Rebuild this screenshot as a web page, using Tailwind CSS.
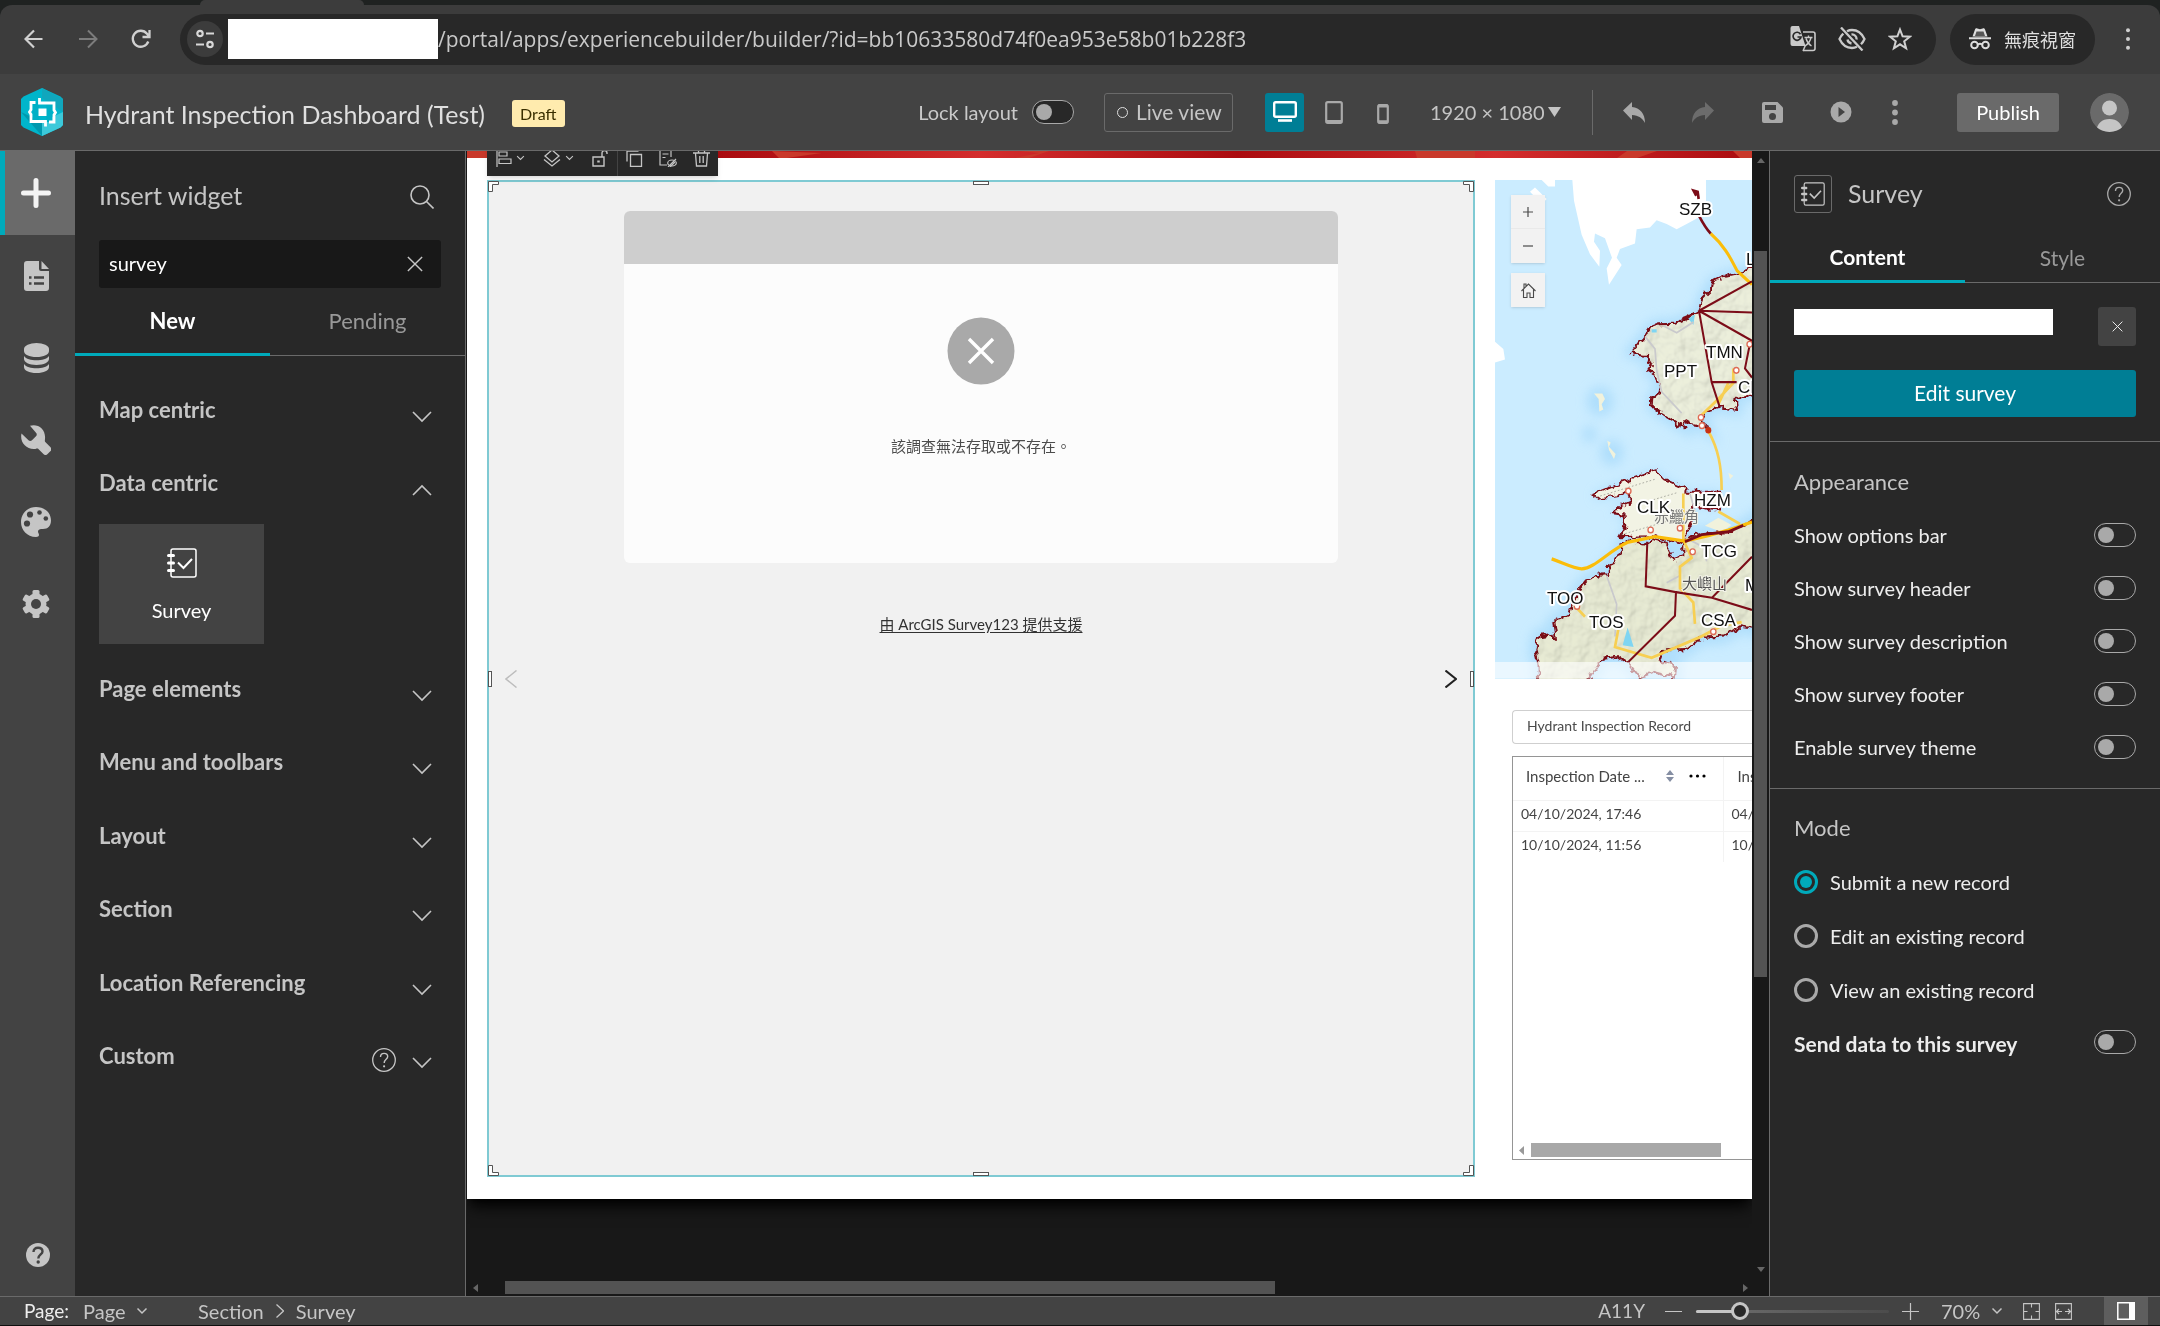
<!DOCTYPE html>
<html lang="en">
<head>
<meta charset="utf-8">
<title>Hydrant Inspection Dashboard (Test)</title>
<script src="https://cdn.jsdelivr.net/npm/@tailwindcss/browser@4"></script>
</head>
<body class="flex h-screen flex-col overflow-hidden bg-[#0f0f0f] font-['Lato','Noto_Sans_CJK_TC',sans-serif] text-[21px] leading-7 text-[#c5c5c5]">
<svg class="hidden">
  <symbol id="chev" viewBox="0 0 20 12"><path d="M1 1l9 9 9-9" fill="none" stroke="currentColor" stroke-width="1.6"/></symbol>
  <symbol id="chev-s" viewBox="0 0 12 8"><path d="M1.500 1.500L6 6l4.500-4.500" fill="none" stroke="currentColor" stroke-width="1.500"/></symbol>
  <symbol id="cross" viewBox="0 0 18 18"><path d="M1 1l16 16M17 1L1 17" fill="none" stroke="currentColor" stroke-width="1.600"/></symbol>
  <symbol id="help" viewBox="0 0 24 24"><circle cx="12" cy="12" r="11.300" fill="none" stroke="currentColor" stroke-width="1.300"/><path d="M8.500 9c0-2.300 1.500-3.600 3.600-3.600 2.200 0 3.600 1.300 3.600 3.200 0 2.800-3.500 2.800-3.500 6.400" fill="none" stroke="currentColor" stroke-width="1.400"/><circle cx="12.100" cy="18.300" r="1.100" fill="currentColor"/></symbol>
  <symbol id="survey" viewBox="0 0 30 30"><rect x="4" y="1" width="25" height="28" rx="2" fill="none" stroke="currentColor" stroke-width="1.500"/><path d="M1.500 7.500h5M1.500 15h5M1.500 22.500h5" stroke="currentColor" stroke-width="3" stroke-linecap="round"/><path d="M11 14.500l5.500 5.500 8.500-9" fill="none" stroke="currentColor" stroke-width="2"/></symbol>
</svg>

<!-- browser chrome -->
<div class="h-[5px] shrink-0 bg-[#1f2221] pl-[200px]"><div class="h-full w-[164px] rounded-t-md bg-[#3c3c3c]"></div></div>
<div class="shrink-0 bg-[#1f2221]">
<header class="flex h-[69px] items-center rounded-t-xl bg-[#3c3c3c] pr-[30px] pb-px pl-6">
  <button aria-label="Back" class="w-[54px]"><svg class="size-5" viewBox="0 0 20 20" fill="none" stroke="#d0d0d0" stroke-width="2.200"><path d="M18.500 10H2M10 1.500L1.500 10l8.500 8.500"/></svg></button>
  <button aria-label="Forward" class="w-[53px]"><svg class="size-5" viewBox="0 0 20 20" fill="none" stroke="#7c7c7c" stroke-width="2"><path d="M1 10h17M10 1.500l8.500 8.500-8.500 8.500"/></svg></button>
  <button aria-label="Reload" class="w-[49px]"><svg class="size-5" viewBox="0 0 20 20" fill="none" stroke="#d0d0d0" stroke-width="2.300"><path d="M17.300 12.500A8 8 0 1 1 16 4.700l2 2.500M18.500 1v7h-7"/></svg></button>
  <div class="flex h-[51px] flex-1 items-center rounded-full bg-[#282828] pr-6 pl-[7px]">
    <button aria-label="Site information" class="flex size-9 items-center justify-center rounded-full bg-[#3c3c3c]"><svg class="size-5" viewBox="0 0 20 20" fill="none" stroke="#d8d8d8" stroke-width="2.200"><circle cx="5" cy="4.500" r="2.700"/><path d="M11 4.500h8M1 15.500h8"/><circle cx="15" cy="15.500" r="2.700"/></svg></button>
    <div class="ml-[5px] h-10 w-[210px] bg-white"></div>
    <input aria-label="Address" class="min-w-0 flex-1 font-['Open_Sans','Noto_Sans',sans-serif] text-[21px] text-[#c9c9c9] outline-none" value="/portal/apps/experiencebuilder/builder/?id=bb10633580d74f0ea953e58b01b228f3">
    <div class="flex items-center gap-[22px]">
      <button aria-label="Translate"><svg class="size-[26px]" viewBox="0 0 26 26"><path d="M13 6h10a2 2 0 0 1 2 2v14.500a2 2 0 0 1-2 2H13" fill="none" stroke="#c9c9c9" stroke-width="1.600"/><path d="M2.500 0H9l6.500 20H2.500A2 2 0 0 1 .5 18V2a2 2 0 0 1 2-2z" fill="#c9c9c9"/><path d="M13 25l2.500-6" stroke="#c9c9c9" stroke-width="1.500"/><path d="M10.500 8.200A4 4 0 1 0 11 11H7.500" fill="none" stroke="#282828" stroke-width="1.700"/><path d="M14.500 11.500h8M18.500 9.500v2M21 11.500c-.8 4-3 6.500-6 8.500M16 12.500c1 3.500 3 6 5.500 7.500" fill="none" stroke="#c9c9c9" stroke-width="1.400"/></svg></button>
      <button aria-label="Tracking blocked"><svg class="h-6 w-7" viewBox="0 0 28 24" fill="none" stroke="#c9c9c9" stroke-width="2.300"><path d="M9 4.200c1.500-.8 3.200-1.200 5-1.200 5.600 0 10 3.700 12.500 9-.9 2-2 3.700-3.500 5.200M19 19.700c-1.500.8-3.200 1.300-5 1.300-5.600 0-10-3.700-12.500-9 .9-2 2.200-3.800 3.800-5.300"/><path d="M13.500 7.500a4.500 4.500 0 0 1 5 5M9.500 12.500c.3 2 1.700 3.600 4 4M3 .5l21.500 23"/></svg></button>
      <button aria-label="Bookmark"><svg class="size-6" viewBox="0 0 24 24" fill="none" stroke="#d0d0d0" stroke-width="2"><path d="M12 2.500l2.600 6.800 7.200.4-5.600 4.600 1.900 7L12 17.300l-6.100 4 1.900-7-5.600-4.600 7.200-.4z"/></svg></button>
    </div>
  </div>
  <div class="ml-[14px] flex h-[51px] items-center gap-[13px] rounded-full bg-[#282828] px-[19px] font-['Noto_Sans_CJK_TC',sans-serif] text-[18px] text-[#dedede]">
    <svg class="size-[22px]" viewBox="0 0 22 22" fill="#dedede"><path d="M0 9.300h22v2H0zM3.500 8.500L6 1.500C6.300.5 7.300 0 8.300.4L11 1.300l2.700-.9c1-.4 2 .1 2.300 1.100l2.500 7z"/><path d="M7.500 3.500h7L16 8H6z" fill="#282828" opacity=".75"/><g fill="none" stroke="#dedede" stroke-width="2"><circle cx="5.500" cy="17" r="3.300"/><circle cx="16.500" cy="17" r="3.300"/><path d="M8.800 16.500q2.200-1.500 4.400 0"/></g></svg>
    無痕視窗
  </div>
  <button aria-label="Browser menu" class="ml-[31px]"><svg class="h-[22px] w-1" viewBox="0 0 4 22" fill="#cfcfcf"><circle cx="2" cy="2.200" r="2"/><circle cx="2" cy="11" r="2"/><circle cx="2" cy="19.800" r="2"/></svg></button>
</header>
</div>

<!-- application bar -->
<header class="flex h-[77px] shrink-0 items-center border-b border-[#6a6a6a] bg-[#434343] pr-[31px] pl-[21px]">
  <svg class="h-12 w-[42px]" viewBox="0 0 42 48"><path d="M21 0l18.500 8.500L42 11v26l-2.500 2.500L21 48 2.500 39.500 0 37V11l2.500-2.500z" fill="#00b5cb"/><path d="M21 48l18.500-8.500L42 37V24L21 34z" fill="#3cc9da"/><path d="M21 0L42 11v13L21 10z" fill="#10a7bd"/><path d="M0 24l21 24V34z" fill="#0098ae"/><path d="M12 14h6v20h-6zM25 14h6v20h-6z" fill="#00b0c6"/><g fill="none" stroke="#fff" stroke-width="2.800"><path d="M18.500 10v5H33v7l1.500 2.500L33 27v7h-5"/><path d="M24.500 38.500v-5H10v-7L8.500 24l1.500-2.500V14.500h4.500"/></g><path d="M17.500 20.500h8v7.500h-8z" fill="#fff"/></svg>
  <h1 class="ml-[22px] pt-[3px] text-[25px] leading-8 text-[#dfdfdf]">Hydrant Inspection Dashboard (Test)</h1>
  <span class="mt-[3px] ml-[27px] flex h-[27px] items-center rounded-[3px] bg-[#ffebae] px-2 text-[16px] text-[#3a2f00]">Draft</span>
  <div class="ml-auto flex items-center">
    <label for="lock" class="text-[20px] text-[#c9c9c9]">Lock layout</label>
    <input id="lock" type="checkbox" class="ml-[14px] h-6 w-[42px] appearance-none rounded-full border border-[#a9a9a9] bg-[#282828] before:mt-[3px] before:ml-[3px] before:block before:size-4 before:rounded-full before:bg-[#a9a9a9]">
    <button class="ml-[30px] flex h-[39px] w-[129px] items-center gap-2 rounded-[3px] border border-[#6a6a6a] pl-3 text-[21px]"><span class="size-[11px] rounded-full border border-[#dfdfdf]"></span>Live view</button>
    <button aria-label="Desktop" class="ml-8 flex h-[39px] w-[39px] items-center justify-center rounded-[3px] bg-[#007e95]"><svg class="h-[22px] w-6" viewBox="0 0 24 22"><rect x="1.200" y="1.200" width="21.600" height="14.600" rx="1.500" fill="none" stroke="#fff" stroke-width="2.400"/><path d="M5 19.500h14" stroke="#fff" stroke-width="2.600"/></svg></button>
    <button aria-label="Tablet" class="ml-[21px]"><svg class="h-[23px] w-[18px]" viewBox="0 0 18 23"><rect x="1.200" y="1.200" width="15.600" height="20.600" rx="1.500" fill="none" stroke="#a9a9a9" stroke-width="2.200"/><path d="M1 20.500h16" stroke="#a9a9a9" stroke-width="3"/></svg></button>
    <button aria-label="Phone" class="ml-[34px] pt-1"><svg class="h-5 w-3" viewBox="0 0 12 20"><rect x="1.200" y="1.200" width="9.600" height="17.600" rx="1.500" fill="none" stroke="#a9a9a9" stroke-width="2.200"/><path d="M1 2h10M1 17.700h10" stroke="#a9a9a9" stroke-width="3"/></svg></button>
    <select aria-label="Screen size" class="ml-[41px] w-[118px] appearance-none text-[20px] outline-none"><option>1920 × 1080</option></select>
    <svg class="h-[10px] w-[13px]" viewBox="0 0 13 10" fill="#c5c5c5"><path d="M0 0h13L6.500 10z"/></svg>
    <div class="ml-[31px] h-[45px] w-px bg-[#6a6a6a]"></div>
    <button aria-label="Undo" class="ml-[30px]"><svg class="h-[21px] w-[22px]" viewBox="0 0 22 21" fill="#a9a9a9"><path d="M9 0v5c8 .8 13 6.500 13 16-2.500-5-6.500-7.500-13-8v5L0 8.500z"/></svg></button>
    <button aria-label="Redo" class="ml-[47px]"><svg class="h-[21px] w-[22px]" viewBox="0 0 22 21" fill="#6c6c6c"><path d="M13 0v5C5 5.800 0 11.500 0 21c2.500-5 6.500-7.500 13-8v5l9-9.500z"/></svg></button>
    <button aria-label="Save" class="ml-12"><svg class="size-[21px]" viewBox="0 0 21 21"><path d="M2 0h13.500L21 5.500V19a2 2 0 0 1-2 2H2a2 2 0 0 1-2-2V2a2 2 0 0 1 2-2z" fill="#a9a9a9"/><path d="M3 3h11v5H3z" fill="#434343"/><circle cx="10.500" cy="14.500" r="3.500" fill="#434343"/></svg></button>
    <button aria-label="Preview" class="ml-[47px]"><svg class="size-[22px]" viewBox="0 0 22 22"><circle cx="11" cy="11" r="10.500" fill="#a9a9a9"/><path d="M8.500 6l6.500 5-6.500 5z" fill="#434343"/></svg></button>
    <button aria-label="More" class="ml-10"><svg class="h-[25px] w-[6px]" viewBox="0 0 6 25" fill="#a9a9a9"><circle cx="3" cy="3" r="2.900"/><circle cx="3" cy="12.500" r="2.900"/><circle cx="3" cy="22" r="2.900"/></svg></button>
    <button class="ml-[59px] h-[39px] w-[102px] rounded-[3px] bg-[#6a6a6a] text-[20px] text-white">Publish</button>
    <button aria-label="Account" class="ml-[31px]"><svg class="size-[39px] rounded-full" viewBox="0 0 39 39"><circle cx="19.500" cy="19.500" r="19.500" fill="#6a6a6a"/><circle cx="19.500" cy="15" r="7.500" fill="#c5c5c5"/><path d="M6 39c1-9 6-13 13.500-13S32 30 33 39z" fill="#c5c5c5"/></svg></button>
  </div>
</header>

<main class="flex min-h-0 flex-1">
  <!-- tool rail -->
  <nav class="flex w-[75px] shrink-0 flex-col justify-between bg-[#434343] text-[#c5c5c5]">
    <div class="flex flex-col">
      <button aria-label="Insert" class="flex h-[84px] items-center border-l-[5px] border-[#00aabb] bg-[#6a6a6a] pl-4"><svg class="size-[30px]" viewBox="0 0 30 30"><path d="M15 2.500v25M2.500 15h25" stroke="#f4f4f4" stroke-width="5" stroke-linecap="round"/></svg></button>
      <button aria-label="Page" class="flex h-[82px] items-center pl-6"><svg class="h-[30px] w-[25px]" viewBox="0 0 25 30"><path d="M3 0h12v8a2 2 0 0 0 2 2h8v17a3 3 0 0 1-3 3H3a3 3 0 0 1-3-3V3a3 3 0 0 1 3-3zM17.500 0L25 8h-7.500z" fill="currentColor"/><path d="M5 16.500h2.500M10 16.500h10M5 22.500h2.500M10 22.500h10" stroke="#434343" stroke-width="2.600"/></svg></button>
      <button aria-label="Data" class="flex h-[82px] items-center pl-6"><svg class="h-[30px] w-[25px]" viewBox="0 0 25 30" fill="currentColor"><ellipse cx="12.500" cy="6" rx="12.500" ry="6"/><path d="M0 6h25v2c0 3.500-5 6-12.500 6S0 11.500 0 8zM0 13c2 3 7 4.300 12.500 4.300S23 16 25 13v3c0 3-5 6-12.500 6S0 19 0 16zM0 21c2 3 7 4.300 12.500 4.300S23 24 25 21v3c0 3.500-5 6-12.500 6S0 27.500 0 24z"/></svg></button>
      <button aria-label="Utilities" class="flex h-[82px] items-center pl-[21px]"><svg class="size-[30px]" viewBox="0 0 30 30" fill="currentColor"><path d="M9 .8C17-1.500 25 4 24 14c-.2 1.500-.3 2.500.3 3.100l5 5a3 3 0 0 1 0 4.200l-2.700 2.700a3 3 0 0 1-4.200 0l-5-5c-.6-.6-1.600-.4-2.900-.1C5.500 25-1.500 17.500.5 8.500l7 6.800c1 1 2.500 1 3.500 0l4-4c1-1 1-2.500 0-3.500z"/></svg></button>
      <button aria-label="Theme" class="flex h-[82px] items-center pl-[21px]"><svg class="size-[30px]" viewBox="0 0 30 30"><path d="M15 0c9 0 15 6 15 13.500 0 5-3 8.500-8 8.500-3 0-5 .5-5 2.500 0 1.500 1 2 1 3.500 0 1.300-1.200 2-3 2C6 30 0 23 0 15S6 0 15 0z" fill="currentColor"/><g fill="#434343"><circle cx="9" cy="7.500" r="3.100"/><circle cx="18.500" cy="5.500" r="2.300"/><circle cx="24.800" cy="11.500" r="2.300"/><circle cx="6" cy="16.500" r="3.100"/></g></svg></button>
      <button aria-label="Settings" class="flex h-[82px] items-center pl-[22px]"><svg class="size-[28px]" viewBox="0 0 28 28"><g fill="currentColor"><circle cx="14" cy="14" r="10.500"/><rect x="10.500" y="0" width="7" height="28" rx="1.500"/><rect x="10.500" y="0" width="7" height="28" rx="1.500" transform="rotate(60 14 14)"/><rect x="10.500" y="0" width="7" height="28" rx="1.500" transform="rotate(120 14 14)"/></g><circle cx="14" cy="14" r="5" fill="#434343"/></svg></button>
    </div>
    <button aria-label="Help" class="mb-[29px] pl-[26px]"><svg class="size-6" viewBox="0 0 24 24"><circle cx="12" cy="12" r="12" fill="currentColor"/><path d="M7.500 9c0-2.800 1.800-4.300 4.500-4.300 2.800 0 4.500 1.500 4.500 3.700 0 3-4 3.200-4.200 7.100" fill="none" stroke="#434343" stroke-width="2.400"/><circle cx="12.200" cy="19" r="1.700" fill="#434343"/></svg></button>
  </nav>

  <!-- insert panel -->
  <aside class="flex w-[391px] shrink-0 flex-col border-r border-[#6a6a6a] bg-[#282828]">
    <div class="flex items-start justify-between pt-7 pr-[31px] pl-6">
      <h2 class="text-[25px] leading-8 text-[#c5c5c5]">Insert widget</h2>
      <button aria-label="Search" class="pt-[6px]"><svg class="size-6" viewBox="0 0 24 24" fill="none" stroke="#c5c5c5" stroke-width="1.600"><circle cx="10" cy="10" r="9"/><path d="M16.500 16.500L23.500 23.500"/></svg></button>
    </div>
    <div class="mt-[29px] mr-6 ml-6 flex h-12 items-center rounded-[3px] bg-[#181818] pr-[18px] pl-[10px]">
      <input aria-label="Search widgets" value="survey" class="min-w-0 flex-1 pb-[2px] text-[20px] text-white outline-none">
      <button aria-label="Clear"><svg class="size-4"><use href="#cross"/></svg></button>
    </div>
    <div class="mt-1 grid h-[64px] grid-cols-2 border-b border-[#6a6a6a]">
      <button class="-mb-px border-b-[3px] border-[#00aabb] pb-1 text-[22px] font-bold text-white">New</button>
      <button class="pb-[6px] text-[22px] text-[#999]">Pending</button>
    </div>
    <div class="flex flex-col pt-[18px] pr-[33px] pl-6 text-[22px] font-bold text-[#c5c5c5]">
      <button class="flex h-[73px] items-center justify-between pb-[2px]"><span>Map centric</span><svg class="mt-[14px] h-3 w-5"><use href="#chev"/></svg></button>
      <button class="flex h-[73px] items-center justify-between pb-[2px]"><span>Data centric</span><svg class="mt-[14px] h-3 w-5 rotate-180"><use href="#chev"/></svg></button>
      <button class="mt-1 mb-[9px] flex h-[120px] w-[165px] flex-col items-center bg-[#434343] pt-6 text-[20px] font-normal text-white"><svg class="size-[30px]"><use href="#survey"/></svg><span class="mt-[18px]">Survey</span></button>
      <button class="flex h-[73px] items-center justify-between pb-[2px]"><span>Page elements</span><svg class="mt-[14px] h-3 w-5"><use href="#chev"/></svg></button>
      <button class="flex h-[74px] items-center justify-between pb-[2px]"><span>Menu and toolbars</span><svg class="mt-[14px] h-3 w-5"><use href="#chev"/></svg></button>
      <button class="flex h-[73px] items-center justify-between pb-[2px]"><span>Layout</span><svg class="mt-[14px] h-3 w-5"><use href="#chev"/></svg></button>
      <button class="flex h-[74px] items-center justify-between pb-[2px]"><span>Section</span><svg class="mt-[14px] h-3 w-5"><use href="#chev"/></svg></button>
      <button class="flex h-[73px] items-center justify-between pb-[2px]"><span>Location Referencing</span><svg class="mt-[14px] h-3 w-5"><use href="#chev"/></svg></button>
      <button class="flex h-[73px] items-center pb-[2px]"><span class="flex-1 text-left">Custom</span><svg class="mt-2 mr-4 size-6"><use href="#help"/></svg><svg class="mt-[14px] h-3 w-5"><use href="#chev"/></svg></button>
    </div>
  </aside>

  <!-- canvas -->
  <section class="flex min-w-0 flex-1 flex-col bg-[#181818] pl-px">
    <div class="flex min-h-0 flex-1">
      <div class="relative min-w-0 flex-1 overflow-hidden">
        <div class="bg-white pb-[22px] shadow-lg shadow-black">
          <svg class="block h-[7px] w-full" viewBox="0 0 1285 7" preserveAspectRatio="none"><defs><linearGradient id="red" x2=".2" spreadMethod="reflect"><stop offset="0" stop-color="#d42d2d"/><stop offset="1" stop-color="#ab0c10"/></linearGradient></defs><path fill="url(#red)" d="M0 0h1285v7H0z"/><path fill="#c9392b" d="M0 0h90v7H0zM305 0l50 2-35 5h-8zM548 7l24-5-20-2h30l-20 7zM948 0h60v7h-58zM1160 0h30l-20 7h-20zM1266 0h19v7h-12z"/></svg>
          <div class="flex gap-5 pt-[22px] pl-5">
            <div class="relative h-[997px] min-w-0 flex-1 border-2 border-[#7fcad3] bg-[#f1f1f1] pt-[29px]">
              <div class="mx-auto flex h-[352px] w-[714px] flex-col items-center overflow-hidden rounded-md bg-[#fcfcfc]">
                <div class="h-[53px] w-full bg-[#cecece]"></div>
                <svg class="mt-[53px] size-[68px]" viewBox="0 0 68 68"><circle cx="34" cy="34" r="33.500" fill="#a9a9a9"/><path d="M22 22l24 24M46 22L22 46" stroke="#fff" stroke-width="3.400"/></svg>
                <p class="mt-[47px] text-[15px] text-[#4c4c4c]">該調查無法存取或不存在。</p>
              </div>
              <a href="#" class="mx-auto mt-[47px] block w-fit text-[15px] text-[#323232] underline underline-offset-2">由 ArcGIS Survey123 提供支援</a>
              <button aria-label="Previous" class="absolute top-[488px] left-4 flex"><svg class="h-[18px] w-3" viewBox="0 0 12 18" fill="none" stroke="#bdbdbd" stroke-width="1.500"><path d="M11.500 .5L1 9l10.500 8.500"/></svg></button>
              <button aria-label="Next" class="absolute top-[488px] right-4 flex"><svg class="h-[18px] w-3" viewBox="0 0 12 18" fill="none" stroke="#222" stroke-width="2"><path d="M.5 .5L11 9 .5 17.500"/></svg></button>
              <svg class="absolute -top-px -left-px size-[11px]" viewBox="0 0 11 11" fill="#fff" stroke="#555"><path d="M.5.5h10v3h-6v7h-4z"/></svg>
              <svg class="absolute -top-px -right-px size-[11px]" viewBox="0 0 11 11" fill="#fff" stroke="#555"><path d="M10.500.5H.5v3h6v7h4z"/></svg>
              <svg class="absolute -bottom-px -left-px size-[11px]" viewBox="0 0 11 11" fill="#fff" stroke="#555"><path d="M.5 10.500h10v-3h-6v-7h-4z"/></svg>
              <svg class="absolute -right-px -bottom-px size-[11px]" viewBox="0 0 11 11" fill="#fff" stroke="#555"><path d="M10.500 10.500H.5v-3h6v-7h4z"/></svg>
              <div class="absolute -top-px left-1/2 h-1 w-4 -translate-x-1/2 border border-[#555] bg-white"></div>
              <div class="absolute -bottom-px left-1/2 h-1 w-4 -translate-x-1/2 border border-[#555] bg-white"></div>
              <div class="absolute top-1/2 -left-px h-4 w-1 -translate-y-1/2 border border-[#555] bg-white"></div>
              <div class="absolute top-1/2 -right-px h-4 w-1 -translate-y-1/2 border border-[#555] bg-white"></div>
            </div>
            <div class="flex w-[257px] shrink-0 flex-col">
              <div class="relative h-[499px]">
                <svg class="block h-full w-full" viewBox="0 0 257 499" font-family="Liberation Sans">
                  <defs>
                    <filter id="soft" x="-30%" y="-30%" width="160%" height="160%"><feGaussianBlur stdDeviation="16"/></filter>
                    <filter id="coast"><feTurbulence type="fractalNoise" baseFrequency=".05" numOctaves="2" seed="7"/><feDisplacementMap in="SourceGraphic" scale="26" xChannelSelector="R" yChannelSelector="G"/></filter>
                    <filter id="relief" x="0" y="0" width="100%" height="100%"><feTurbulence type="fractalNoise" baseFrequency=".02" numOctaves="3" seed="4" result="n"/><feDiffuseLighting in="n" surfaceScale="14" lighting-color="#fbfbf0" result="l"><feDistantLight azimuth="225" elevation="62"/></feDiffuseLighting><feComposite in="l" in2="SourceGraphic" operator="in"/></filter>
                    <path id="north" d="M1076 352L1018 372 980 380 950 392 932 402 930 420 908 440 900 478 860 500 820 515 775 516 752 524 735 548 710 575 692 594 712 602 738 604 756 630 745 645 762 655 780 685 775 710 757 722 755 745 790 770 825 790 857 808 850 785 870 795 900 800 925 815 905 775 915 760 958 748 1012 756 1006 728 1076 705z"/>
                    <path id="clk" d="M580 990L690 950 768 925 795 950 855 975 864 985 900 985 962 985 960 1035 920 1030 880 1020 862 1040 875 1070 860 1100 850 1130 760 1110 658 1112 676 1080 670 1052 638 1048 650 1030 690 1012 685 990 585 1006z"/>
                    <path id="south" d="M1076 1052L1030 1082 985 1098 937 1100 880 1106 850 1130 850 1165 820 1175 800 1130 760 1120 730 1130 685 1122 665 1135 660 1160 645 1183 622 1190 628 1218 610 1216 560 1235 540 1258 520 1290 508 1325 460 1352 468 1400 445 1385 416 1390 406 1425 415 1460 418 1528 550 1528 590 1480 610 1450 650 1445 690 1470 720 1505 760 1490 825 1505 828 1475 775 1455 790 1430 860 1425 900 1395 970 1390 1020 1362 1076 1372z"/>
                  </defs>
                  <path fill="#cbecff" d="M0 0h257v499H0z"/>
                  <g transform="scale(.3333 .3571) translate(-285 -112)">
                    <g fill="#a0d7fa" opacity=".65" filter="url(#soft)"><use href="#north" stroke="#a0d7fa" stroke-width="30"/><use href="#clk"/><use href="#south" stroke="#a0d7fa" stroke-width="40"/><circle cx="600" cy="732" r="40"/><circle cx="568" cy="824" r="22"/><circle cx="635" cy="875" r="35"/></g>
                    <path fill="#fff" d="M516 100H918V170L900 215 860 235 830 250 800 235 770 225 750 245 710 250 705 290 660 305 650 330 665 350 627 405 620 360 636 330 615 275 585 262 582 285 600 310 598 355 570 320 545 265 522 170zM390 145l15-12 35 32-15 15zM425 112h40v18h-20zM285 565l25 20 5 30-30 8z"/>
                    <g stroke="#7c0c18" stroke-width="6" stroke-linejoin="round" filter="url(#coast)"><use href="#north" fill="#edf0e0"/><use href="#clk" fill="#f2f3e4"/><use href="#south" fill="#e9ecd8"/></g>
                    <g filter="url(#relief)" opacity=".32" style="mix-blend-mode:multiply"><use href="#north"/><use href="#south"/></g>
                    <g fill="#f1f2dc"><path d="M582 710l25 0 8 15-10 15 5 15-12 5-2-35zM622 842l10 5-5 12 20 20-5 14-15-25zM985 932l15 8-10 10zM915 1080l40-22 40 20-30 20z"/></g>
                    <g fill="#7fd5f2"><path d="M668 1415l15-50 18 55zM865 500l20-12-5 30zM755 530h15v9h-15z"/></g>
                    <g fill="none" stroke="#c9c9cc" stroke-width="5"><path d="M735 550l30 35 5 60 15 60 60 60M790 520l40 20 50-30M870 990l15 50M620 1220l30 80-5 90M800 1240l40-20M850 1110l60 30 10 40"/></g>
                    <g fill="none" stroke="#8d8d86" stroke-width="2" stroke-dasharray="5 6"><path d="M590 1000l175-50M665 1105l165-45M750 1010l80-22"/></g>
                    <g fill="none" stroke="#f7cf52" stroke-width="8"><path d="M925 815c30 50 40 100 40 165M955 1040l65 35M1000 640v40l-50 50-45 40M985 680l-30 60M850 990v130l25 50-35 25v60l40 40 5 60M525 1305l30 30M655 1370l-10 50 110 30 150-60 60-30 60-10"/></g>
                    <g fill="none" stroke="#fbbd0a" stroke-width="9"><path d="M455 1173c50 18 70 28 90 28 40-2 80-50 140-75l80-15 90 12 70-15 60-16 71-22M932 262c45 38 60 70 80 105l44 38"/></g>
                    <path d="M932 262c-15-15-25-32-34-48M896 165l-3-20-12-3 8 14M855 1125l50-20 80-8 45-18" fill="none" stroke="#7c0c18" stroke-width="8"/>
                    <g fill="none" stroke="#7c0c18" stroke-width="6"><path d="M897 478l159-82M897 478l159 5M897 478l159 84-10 8M897 478l38 200 25 72M935 678h75M1050 570l-15 70 21 25M742 1125l-5 125 91 16-3 66-140 130M828 1266l108 16 120 34M936 1282l120-115"/></g>
                    <g fill="#fff" stroke="#dd6b55" stroke-width="4"><circle cx="685" cy="983" r="8"/><circle cx="752" cy="1092" r="8"/><circle cx="840" cy="1087" r="8"/><circle cx="878" cy="1153" r="8"/><circle cx="531" cy="1306" r="8"/><circle cx="940" cy="1377" r="8"/><circle cx="903" cy="777" r="8"/><circle cx="906" cy="800" r="8"/><circle cx="1009" cy="645" r="8"/><circle cx="1049" cy="572" r="8"/></g>
                    <circle cx="925" cy="813" r="9" fill="#c93214"/>
                    <path fill="#fff" fill-opacity=".6" d="M285 1462h771v46H285z"/>
                  </g>
                  <g font-family="Noto Sans CJK TC" font-size="15" fill="#777" stroke="#f4f4ea" stroke-width="2" paint-order="stroke"><text x="159" y="342">赤鱲角</text><text x="187" y="409" fill="#555">大嶼山</text></g>
                  <g font-size="17" fill="#111" stroke="#fff" stroke-width="4" stroke-linejoin="round" paint-order="stroke"><text x="184" y="35">SZB</text><text x="251" y="85">L</text><text x="211" y="178">TMN</text><text x="169" y="197">PPT</text><text x="243" y="213">CI</text><text x="142" y="333">CLK</text><text x="199" y="326">HZM</text><text x="206" y="377">TCG</text><text x="52" y="424">TOO</text><text x="94" y="448">TOS</text><text x="206" y="446">CSA</text><text x="250" y="411">M</text></g>
                </svg>
                <div class="absolute top-[15px] left-4 flex w-[34px] flex-col gap-[10px] text-[#4a4a4a]">
                  <div class="flex flex-col bg-[#f2f2f2] shadow">
                    <button aria-label="Zoom in" class="flex h-[34px] items-center justify-center border-b border-[#e9e9e9]"><svg class="size-[10px]" viewBox="0 0 10 10" stroke="currentColor" stroke-width="1.200"><path d="M5 0v10M0 5h10"/></svg></button>
                    <button aria-label="Zoom out" class="flex h-[34px] items-center justify-center"><svg class="size-[10px]" viewBox="0 0 10 10" stroke="currentColor" stroke-width="1.200"><path d="M0 5h10"/></svg></button>
                  </div>
                  <button aria-label="Home" class="flex h-[34px] items-center justify-center bg-[#f2f2f2] shadow"><svg class="size-[15px]" viewBox="0 0 15 15" fill="none" stroke="currentColor" stroke-width="1.100"><path d="M.5 8l7-7 7 7M2.500 6.500v8h3.500v-4.500h3v4.500h3.500v-8M3 5V1h2v2.500"/></svg></button>
                </div>
              </div>
              <div class="mt-[31px] ml-[17px] flex h-[34px] items-center rounded-l-sm border border-r-0 border-[#cfcfcf] pb-[3px] pl-[14px] text-[14px] text-[#4a4a4a]">Hydrant Inspection Record</div>
              <div class="mt-3 ml-[17px] flex h-[404px] flex-col justify-between overflow-hidden border border-r-0 border-[#959595] text-[#444]">
                <table class="w-[420px] table-fixed border-collapse text-left leading-5">
                  <thead><tr class="h-[43px] border-b border-[#f3f3f3]">
                    <th class="w-1/2 border-r border-[#f3f3f3] pb-1 pl-[13px] text-[15px] font-normal"><div class="flex items-center whitespace-nowrap"><span class="w-[140px]">Inspection Date ...</span><svg class="h-3 w-2" viewBox="0 0 8 12" fill="#858ea3"><path d="M0 5l4-5 4 5zM0 7l4 5 4-5z"/></svg><svg class="ml-[15px] h-1 w-[17px]" viewBox="0 0 17 4"><circle cx="2" cy="2" r="1.600"/><circle cx="8.500" cy="2" r="1.600"/><circle cx="15" cy="2" r="1.600"/></svg></div></th>
                    <th class="pb-1 pl-[14px] text-[15px] font-normal whitespace-nowrap">Inspection Date</th></tr></thead>
                  <tbody>
                    <tr class="h-[31px] border-b border-[#f3f3f3] text-[14px]"><td class="border-r border-[#f3f3f3] pb-1 pl-2">04/10/2024, 17:46</td><td class="pb-1 pl-2">04/10/2024, 17:46</td></tr>
                    <tr class="h-[31px] text-[14px]"><td class="border-r border-[#f3f3f3] pb-1 pl-2">10/10/2024, 11:56</td><td class="pb-1 pl-2">10/10/2024, 11:56</td></tr>
                  </tbody>
                </table>
                <div class="mb-[2px] flex h-[14px] items-center gap-[7px] pl-[6px]"><svg class="h-[9px] w-[5px]" viewBox="0 0 5 9" fill="#999"><path d="M5 0v9L0 4.500z"/></svg><div class="h-full w-[190px] bg-[#a8a8a8]"></div></div>
              </div>
            </div>
          </div>
        </div>
        <!-- widget toolbar -->
        <div class="absolute -top-[11px] left-5 flex h-9 w-[231px] items-center bg-[#282828] pl-[9px] text-[#c5c5c5] shadow-md">
          <svg class="h-[18px] w-4" viewBox="0 0 16 18" fill="none" stroke="currentColor" stroke-width="1.200"><path d="M1 0v18M3 3h8v4H3zM3 10h12v4.500H3z"/></svg>
          <svg class="ml-1 h-[6px] w-[9px]"><use href="#chev-s"/></svg>
          <svg class="ml-[18px] h-[18px] w-[18px]" viewBox="0 0 18 18" fill="none" stroke="currentColor" stroke-width="1.300"><path d="M9 1l7 6-7 6-7-6zM1 10.500l8 6.500 8-6.500"/></svg>
          <svg class="ml-1 h-[6px] w-[9px]"><use href="#chev-s"/></svg>
          <svg class="ml-[18px] h-[18px] w-4" viewBox="0 0 16 18" fill="none" stroke="currentColor" stroke-width="1.400"><path d="M1 8h11v9H1zM10 8V4a2.500 2.500 0 0 1 5 0v1"/><path d="M6.500 11.500v2" stroke-width="2.500"/></svg>
          <div class="ml-[9px] h-full w-px bg-[#434343]"></div>
          <svg class="ml-2 size-[17px]" viewBox="0 0 17 17" fill="none" stroke="currentColor" stroke-width="1.300"><path d="M4.500 4.500h11v12h-11zM1 11.500V1h11.500"/></svg>
          <svg class="ml-4 h-[18px] w-[18px]" viewBox="0 0 18 18" fill="none" stroke="currentColor" stroke-width="1.200"><path d="M8 16H1V1h11v7M3.500 5h6M3.500 8.500h3"/><ellipse cx="13" cy="14" rx="4.300" ry="3"/><path d="M9 18l8-8M11 18l5-5"/></svg>
          <svg class="ml-4 h-[18px] w-[17px]" viewBox="0 0 17 18" fill="none" stroke="currentColor" stroke-width="1.300"><path d="M0 4h17M5.500 3.500V1h6v2.500M2.500 4.500l1 12.500h10l1-12.500M6.800 7v7M10.200 7v7"/></svg>
        </div>
      </div>
      <div class="flex w-[17px] shrink-0 flex-col items-center justify-between pt-[7px] pb-[7px]">
        <svg class="h-[5px] w-2" viewBox="0 0 8 5" fill="#666"><path d="M4 0l4 5H0z"/></svg>
        <div class="mt-[88px] h-[726px] w-[13px] bg-[#535353]"></div>
        <svg class="mt-auto h-[5px] w-2" viewBox="0 0 8 5" fill="#666"><path d="M0 0h8L4 5z"/></svg>
      </div>
    </div>
    <div class="flex h-[17px] items-center pr-[21px] pl-[6px]">
      <svg class="h-2 w-[5px]" viewBox="0 0 5 8" fill="#666"><path d="M5 0v8L0 4z"/></svg>
      <div class="ml-[27px] h-[13px] w-[770px] bg-[#535353]"></div>
      <svg class="ml-auto h-2 w-[5px]" viewBox="0 0 5 8" fill="#666"><path d="M0 0l5 4-5 4z"/></svg>
    </div>
  </section>

  <!-- settings panel -->
  <aside class="flex w-[391px] shrink-0 flex-col border-l border-[#6a6a6a] bg-[#282828] text-[20px] text-[#ededed]">
    <div class="flex items-center pt-6 pr-[29px] pl-6">
      <div class="flex size-[38px] items-center justify-center rounded-[3px] border border-[#6a6a6a] text-[#c5c5c5]"><svg class="size-6"><use href="#survey"/></svg></div>
      <h2 class="ml-4 flex-1 pb-[2px] text-[25px] leading-8 text-[#c5c5c5]">Survey</h2>
      <button aria-label="Help" class="text-[#a9a9a9]"><svg class="size-6"><use href="#help"/></svg></button>
    </div>
    <div class="mt-5 grid h-[50px] grid-cols-2 border-b border-[#6a6a6a]">
      <button class="-mb-px border-b-[3px] border-[#00aabb] text-[21px] font-bold text-white">Content</button>
      <button class="text-[21px] text-[#999]">Style</button>
    </div>
    <div class="flex flex-col border-b border-[#6a6a6a] px-6 pt-6 pb-6">
      <div class="flex items-start justify-between"><div class="mt-[2px] h-[26px] w-[259px] bg-white"></div><button aria-label="Remove" class="flex h-[39px] w-[38px] items-center justify-center rounded-[3px] bg-[#434343] text-[#ededed]"><svg class="size-[11px]"><use href="#cross"/></svg></button></div>
      <button class="mt-6 h-[47px] rounded-[3px] bg-[#007e95] pb-[2px] text-[21px] text-white">Edit survey</button>
    </div>
    <div class="flex flex-col gap-[25px] border-b border-[#6a6a6a] px-6 pt-[26px] pb-[27px]">
      <h3 class="text-[22px] text-[#c5c5c5]">Appearance</h3>
      <div class="flex items-center justify-between"><label for="t1">Show options bar</label><input id="t1" type="checkbox" class="h-6 w-[42px] appearance-none rounded-full border border-[#a9a9a9] before:mt-[3px] before:ml-[3px] before:block before:size-4 before:rounded-full before:bg-[#a9a9a9]"></div>
      <div class="flex items-center justify-between"><label for="t2">Show survey header</label><input id="t2" type="checkbox" class="h-6 w-[42px] appearance-none rounded-full border border-[#a9a9a9] before:mt-[3px] before:ml-[3px] before:block before:size-4 before:rounded-full before:bg-[#a9a9a9]"></div>
      <div class="flex items-center justify-between"><label for="t3">Show survey description</label><input id="t3" type="checkbox" class="h-6 w-[42px] appearance-none rounded-full border border-[#a9a9a9] before:mt-[3px] before:ml-[3px] before:block before:size-4 before:rounded-full before:bg-[#a9a9a9]"></div>
      <div class="flex items-center justify-between"><label for="t4">Show survey footer</label><input id="t4" type="checkbox" class="h-6 w-[42px] appearance-none rounded-full border border-[#a9a9a9] before:mt-[3px] before:ml-[3px] before:block before:size-4 before:rounded-full before:bg-[#a9a9a9]"></div>
      <div class="flex items-center justify-between"><label for="t5">Enable survey theme</label><input id="t5" type="checkbox" class="h-6 w-[42px] appearance-none rounded-full border border-[#a9a9a9] before:mt-[3px] before:ml-[3px] before:block before:size-4 before:rounded-full before:bg-[#a9a9a9]"></div>
    </div>
    <div class="flex flex-col gap-[26px] px-6 pt-[25px]">
      <h3 class="text-[22px] text-[#c5c5c5]">Mode</h3>
      <label class="flex items-center gap-3"><input type="radio" name="mode" checked class="size-6 appearance-none rounded-full border-[3px] border-[#00aabb] bg-[#00aabb] bg-clip-content p-[3px]">Submit a new record</label>
      <label class="flex items-center gap-3"><input type="radio" name="mode" class="size-6 appearance-none rounded-full border-[3px] border-[#a9a9a9]">Edit an existing record</label>
      <label class="flex items-center gap-3"><input type="radio" name="mode" class="size-6 appearance-none rounded-full border-[3px] border-[#a9a9a9]">View an existing record</label>
      <div class="flex items-start justify-between"><label for="t6" class="text-[21px] font-bold">Send data to this survey</label><input id="t6" type="checkbox" class="h-6 w-[42px] appearance-none rounded-full border border-[#a9a9a9] before:mt-[3px] before:ml-[3px] before:block before:size-4 before:rounded-full before:bg-[#a9a9a9]"></div>
    </div>
  </aside>
</main>

<!-- status bar -->
<footer class="mb-px flex h-[29px] shrink-0 items-center border-t border-[#6a6a6a] bg-[#434343] pr-3 pl-6 text-[20px] text-[#c5c5c5]">
  <label for="pg" class="text-[19px] text-[#ededed]">Page:</label>
  <select id="pg" class="ml-[14px] w-[53px] appearance-none outline-none"><option>Page</option></select>
  <svg class="h-2 w-3"><use href="#chev-s"/></svg>
  <a href="#" class="ml-[50px]">Section</a>
  <svg class="mx-3 h-[14px] w-2" viewBox="0 0 8 14" fill="none" stroke="currentColor" stroke-width="1.300"><path d="M.5.5L7.500 7 .5 13.500"/></svg>
  <a href="#">Survey</a>
  <div class="ml-auto flex h-full items-center">
    <span class="text-[19px]">A11Y</span>
    <button aria-label="Zoom out" class="ml-5 h-px w-[17px] bg-[#c5c5c5]"></button>
    <div class="relative ml-[14px] flex h-[18px] w-[193px] items-center">
      <div class="h-[3px] w-full rounded bg-linear-to-r from-[#707070] to-[#4c4c4c]"></div>
      <div class="absolute left-0 h-[3px] w-11 rounded bg-[#c5c5c5]"></div>
      <input type="range" aria-label="Zoom" min="0" max="100" value="20" class="absolute inset-0 w-full appearance-none bg-transparent [&::-webkit-slider-thumb]:size-[18px] [&::-webkit-slider-thumb]:appearance-none [&::-webkit-slider-thumb]:rounded-full [&::-webkit-slider-thumb]:border-[3px] [&::-webkit-slider-thumb]:border-[#c5c5c5] [&::-webkit-slider-thumb]:bg-[#282828]">
    </div>
    <button aria-label="Zoom in" class="ml-[13px]"><svg class="size-[17px]" viewBox="0 0 17 17" stroke="currentColor" stroke-width="1.200"><path d="M8.500 0v17M0 8.500h17"/></svg></button>
    <select aria-label="Zoom level" class="ml-[22px] w-[50px] appearance-none outline-none"><option>70%</option></select>
    <svg class="h-2 w-3"><use href="#chev-s"/></svg>
    <button aria-label="Fit page" class="ml-5"><svg class="size-[17px]" viewBox="0 0 17 17" fill="none" stroke="currentColor" stroke-width="1.100"><path d="M.6.600h15.800v15.800H.6zM8.500.5v4M8.500 12.500v4M.5 8.500h4M12.500 8.500h4"/></svg></button>
    <button aria-label="Fit width" class="ml-[15px]"><svg class="size-[17px]" viewBox="0 0 17 17" fill="none" stroke="currentColor" stroke-width="1.100"><path d="M.6.600h15.800v15.800H.6zM1.500 8.500h5.500M10 8.500h5.500M4 6L1.500 8.500 4 11M13 6l2.500 2.500L13 11"/></svg></button>
    <button aria-label="Toggle side panel" class="ml-8 flex h-full w-11 items-center justify-center bg-[#5e5e5e]"><svg class="size-[18px]" viewBox="0 0 18 18"><path d="M.8.800h16.400v16.400H.8z" fill="none" stroke="#fff" stroke-width="1.500"/><path d="M12 0h6v18h-6z" fill="#fff"/></svg></button>
  </div>
</footer>
</body>
</html>
